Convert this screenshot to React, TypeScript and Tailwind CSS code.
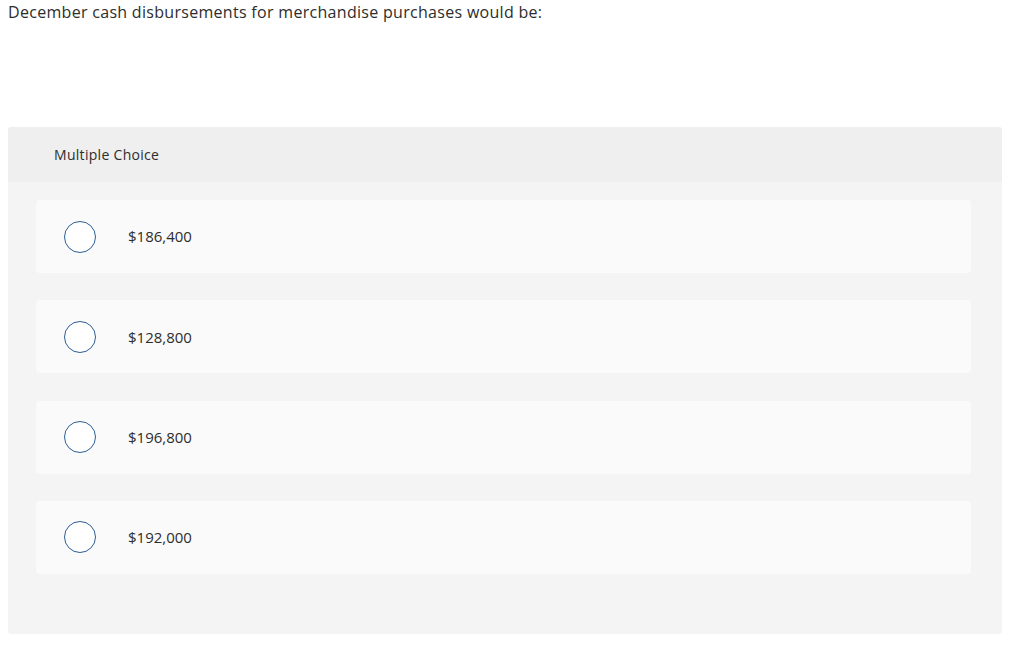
const options = ["$186,400", "$128,800", "$196,800", "$192,000"];

export default function App() {
  return (
    <div className="min-h-[650px] bg-white text-[#333] font-['Open_Sans',sans-serif]">
      <p className="pl-2 pt-[2px] text-[16px] leading-5 tracking-[0.3px] text-[#2d2d2d]">
        December cash disbursements for merchandise purchases would be:
      </p>

      <div className="mt-[105px] ml-2 w-[994px] rounded-[3px] bg-[#f4f4f4] pb-[60px]">
        <div className="h-[55px] rounded-t-[3px] bg-[#efefef] pl-[46px] pt-[18px] text-[14px] leading-5 tracking-[0.3px] text-[#2d2d2d]">
          Multiple Choice
        </div>

        <div className="flex flex-col gap-[27.3px] pl-[28px] pr-[31px] pt-[18px]">
          {options.map((opt) => (
            <div
              key={opt}
              className="flex h-[73px] items-center rounded-[4px] bg-[#fafafa] pl-[28px]"
            >
              <span className="h-[32px] w-[32px] rounded-full border border-[#2b5f96] bg-white" />
              <span className="ml-[32px] text-[15px] text-[#2d2d2d]">{opt}</span>
            </div>
          ))}
        </div>
      </div>
    </div>
  );
}
